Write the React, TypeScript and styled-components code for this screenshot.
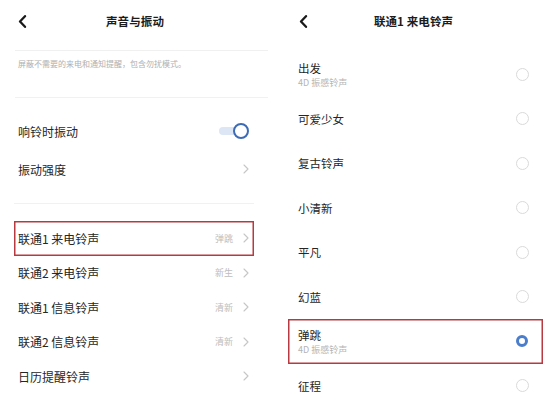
import React from "react";
import styled, { createGlobalStyle } from "styled-components";

const Global = createGlobalStyle`
  html, body { margin: 0; padding: 0; background: #fff; }
  body { font-family: "Noto Sans CJK SC", "Noto Sans", sans-serif; color: #262626; }
`;

const Page = styled.div`
  width: 551px;
  height: 400px;
  display: flex;
  overflow: hidden;
  background: #fff;
`;

const Panel = styled.div<{ $w: number }>`
  width: ${(p) => p.$w}px;
  flex: none;
  display: flex;
  flex-direction: column;
  overflow: hidden;
`;

const Header = styled.div<{ $side: number; $shift?: number }>`
  height: 42px;
  flex: none;
  display: grid;
  grid-template-columns: 1fr auto 1fr;
  align-items: center;
  padding: 0 ${(p) => p.$side + (p.$shift || 0)}px 0 ${(p) => p.$side}px;
`;

const Title = styled.div`
  font-size: 11.5px;
  font-weight: 700;
  color: #1c1c1c;
  letter-spacing: 0.1px;
`;

const Back = () => (
  <svg width="9" height="13" viewBox="0 0 9 13">
    <polyline points="7,1.2 2,6.5 7,11.8" fill="none" stroke="#1a1a1a" strokeWidth="2.3" strokeLinecap="round" strokeLinejoin="round" />
  </svg>
);

const Chevron = () => (
  <svg width="6" height="10" viewBox="0 0 6 10">
    <polyline points="1,1 5,5 1,9" fill="none" stroke="#c6c6c6" strokeWidth="1.1" strokeLinecap="round" strokeLinejoin="round" />
  </svg>
);

const Fragment = styled.div`
  height: 55px;
  flex: none;
  margin: 0 8px 0 15px;
  border-bottom: 1px solid #f1f1f1;
  display: flex;
  flex-direction: column;
`;

const FragLine = styled.div`
  margin-top: 8px;
  height: 1px;
  background: #f0f0f0;
`;

const FragBody = styled.div`
  display: flex;
  align-items: center;
  justify-content: space-between;
  padding: 0 22px 0 3px;
  height: 24px;
`;

const Hint = styled.div`
  font-size: 8px;
  color: #b0b0b0;
`;

const Group = styled.div<{ $top: number; $bottom: number; $line?: boolean }>`
  flex: none;
  margin: 0 22px 0 14px;
  padding: ${(p) => p.$top}px 0 ${(p) => p.$bottom}px;
  border-bottom: ${(p) => (p.$line ? "1px solid #f1f1f1" : "none")};
  display: flex;
  flex-direction: column;
`;

const Row = styled.div<{ $h: number; $hl?: boolean }>`
  height: ${(p) => p.$h}px;
  display: flex;
  align-items: center;
  padding: 0 5px 0 4px;
  gap: 6px;
  box-shadow: ${(p) => (p.$hl ? "inset 0 0 0 1.5px #b83a40" : "none")};
`;

const Label = styled.div`
  flex: 1;
  font-size: 12px;
  color: #262626;
`;

const Value = styled.div`
  font-size: 9px;
  color: #bdbdbd;
  margin-right: 4px;
`;

const Toggle = styled.div`
  position: relative;
  width: 30px;
  height: 16px;
  display: flex;
  align-items: center;
`;

const Track = styled.div`
  width: 22px;
  height: 8px;
  border-radius: 4px 0 0 4px;
  background: #dce6f5;
`;

const Knob = styled.div`
  position: absolute;
  right: 0;
  top: 0;
  width: 12px;
  height: 12px;
  border-radius: 50%;
  border: 2px solid #3e6bb6;
  background: #fff;
`;

const List = styled.div`
  display: flex;
  flex-direction: column;
  padding-top: 10px;
`;

const RRow = styled.div<{ $hl?: boolean }>`
  height: 44.5px;
  flex: none;
  margin: 0 8px 0 12px;
  padding: 0 14px 0 10px;
  display: flex;
  align-items: center;
  box-shadow: ${(p) => (p.$hl ? "inset 0 0 0 1.5px #b83a40" : "none")};
`;

const RText = styled.div`
  flex: 1;
  display: flex;
  flex-direction: column;
`;

const RLabel = styled.div`
  font-size: 11.5px;
  color: #262626;
  line-height: 16px;
`;

const RSub = styled.div`
  font-size: 9px;
  color: #b4b4b4;
  line-height: 13px;
`;

const Radio = styled.div<{ $on?: boolean }>`
  box-sizing: border-box;
  width: ${(p) => (p.$on ? 12 : 13)}px;
  height: ${(p) => (p.$on ? 12 : 13)}px;
  border-radius: 50%;
  border: ${(p) => (p.$on ? "3px solid #4a7dcc" : "1px solid #dadada")};
  margin-right: ${(p) => (p.$on ? 1 : 0)}px;
`;

const settings = [
  { label: "联通1 来电铃声", value: "弹跳", hl: true },
  { label: "联通2 来电铃声", value: "新生" },
  { label: "联通1 信息铃声", value: "清新" },
  { label: "联通2 信息铃声", value: "清新" },
  { label: "日历提醒铃声", value: "" },
];

const tones = [
  { label: "出发", sub: "4D 振感铃声" },
  { label: "可爱少女" },
  { label: "复古铃声" },
  { label: "小清新" },
  { label: "平凡" },
  { label: "幻蓝" },
  { label: "弹跳", sub: "4D 振感铃声", on: true },
  { label: "征程" },
];

export default function App() {
  return (
    <>
      <Global />
      <Page>
        <Panel $w={276}>
          <Header $side={18} $shift={6}>
            <div><Back /></div>
            <Title>声音与振动</Title>
            <div />
          </Header>
          <Fragment>
            <FragLine />
            <FragBody>
              <Hint>屏蔽不需要的来电和通知提醒，包含勿扰模式。</Hint>
            </FragBody>
          </Fragment>
          <Group $top={14} $bottom={15} $line>
            <Row $h={38}>
              <Label>响铃时振动</Label>
              <Toggle>
                <Track />
                <Knob />
              </Toggle>
            </Row>
            <Row $h={38}>
              <Label>振动强度</Label>
              <Chevron />
            </Row>
          </Group>
          <Group $top={17} $bottom={0}>
            {settings.map((s) => (
              <Row key={s.label} $h={34.5} $hl={s.hl}>
                <Label>{s.label}</Label>
                {s.value && <Value>{s.value}</Value>}
                <Chevron />
              </Row>
            ))}
          </Group>
        </Panel>
        <Panel $w={275}>
          <Header $side={23}>
            <div><Back /></div>
            <Title>联通1 来电铃声</Title>
            <div />
          </Header>
          <List>
            {tones.map((t) => (
              <RRow key={t.label} $hl={t.on}>
                <RText>
                  <RLabel>{t.label}</RLabel>
                  {t.sub && <RSub>{t.sub}</RSub>}
                </RText>
                <Radio $on={t.on} />
              </RRow>
            ))}
          </List>
        </Panel>
      </Page>
    </>
  );
}
